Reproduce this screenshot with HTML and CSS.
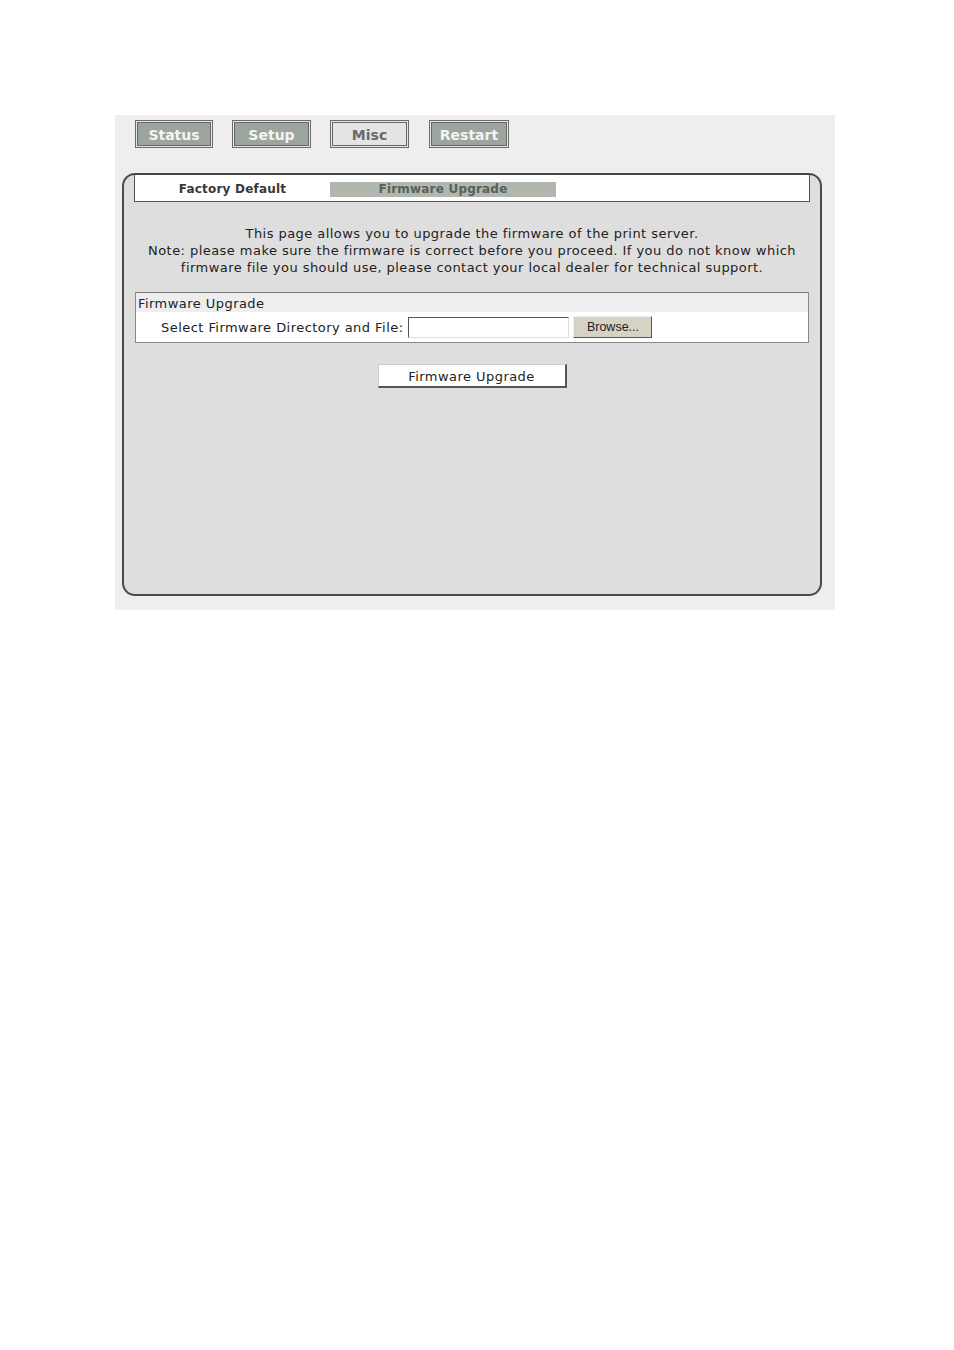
FILE: index.html
```html
<!DOCTYPE html>
<html>
<head>
<meta charset="utf-8">
<link rel="stylesheet" href="styles.css">
</head>
<body>
<div class="panel">
  <div class="topnav">
    <span class="tab tab-dark tab-status">Status</span>
    <span class="tab tab-dark tab-setup">Setup</span>
    <span class="tab tab-light tab-misc">Misc</span>
    <span class="tab tab-dark tab-restart">Restart</span>
  </div>
  <div class="box">
    <div class="subnav">
      <div class="subcell">Factory Default</div>
      <div class="subcell subcell-active"><span>Firmware Upgrade</span></div>
    </div>
    <div class="intro">
      This page allows you to upgrade the firmware of the print server.<br>
      Note: please make sure the firmware is correct before you proceed. If you do not know which<br>
      firmware file you should use, please contact your local dealer for technical support.
    </div>
    <div class="fwtable">
      <div class="fwhead">Firmware Upgrade</div>
      <div class="fwrow">
        <span class="fwlabel">Select Firmware Directory and File:</span>
        <span class="fwinput"></span>
        <span class="browse">Browse...</span>
      </div>
    </div>
    <div class="actions">
      <span class="upgrade">Firmware Upgrade</span>
    </div>
  </div>
</div>
</body>
</html>
```

FILE: styles.css
```css
html, body {
  margin: 0;
  padding: 0;
  background: #ffffff;
}
body {
  font-family: "DejaVu Sans", Verdana, sans-serif;
  color: #222;
}
.panel {
  margin: 115px 0 0 115px;
  width: 720px;
  height: 495px;
  background: #eeeeee;
  box-sizing: border-box;
  padding: 5px 0 0 7px;
}
.topnav {
  display: flex;
  padding-left: 13px;
  height: 28px;
}
.tab {
  box-sizing: border-box;
  height: 28px;
  padding-top: 1px;
  display: flex;
  align-items: center;
  justify-content: center;
  font-weight: bold;
  font-size: 14px;
  border: 1px solid #6b6b6b;
  box-shadow: inset 0 0 0 1px #e8e8e8, inset 0 0 0 2px #666;
}
.tab-status { width: 78px; }
.tab-setup { width: 79px; margin-left: 19px; }
.tab-misc { width: 79px; margin-left: 19px; }
.tab-restart { width: 80px; margin-left: 20px; }
.tab-dark {
  background: #9ca59d;
  color: #f4f4f4;
}
.tab-light {
  background: #e4e4e4;
  color: #6a6a6a;
}
.box {
  margin-top: 25px;
  width: 700px;
  height: 423px;
  box-sizing: border-box;
  border: 2px solid #4a4a4a;
  border-radius: 13px;
  background: #dedede;
  padding: 0 10px;
}
.subnav {
  margin-top: -1px;
  height: 28px;
  padding-top: 2px;
  box-sizing: border-box;
  background: #fff;
  border: 1px solid #555;
  border-top-color: #444;
  display: flex;
  align-items: center;
  font-size: 12px;
  letter-spacing: 0.2px;
  font-weight: bold;
  color: #383838;
}
.subcell {
  width: 195px;
  text-align: center;
}
.subcell-active {
  width: 226px;
  height: 15px;
  background: #b1b6af;
  color: #56615a;
  line-height: 15px;
}
.intro {
  margin-top: 23px;
  text-align: center;
  font-size: 13px;
  line-height: 17px;
  letter-spacing: 0.45px;
}
.fwtable {
  margin: 16px 0 0 1px;
  width: 674px;
  box-sizing: border-box;
  border: 1px solid #888;
  border-top-color: #777;
  font-size: 13px;
  letter-spacing: 0.45px;
}
.fwhead {
  background: #eeeeee;
  height: 19px;
  line-height: 21px;
  padding-left: 2px;
}
.fwrow {
  background: #fff;
  height: 30px;
  display: flex;
  align-items: center;
  padding-left: 25px;
}
.fwlabel {
  margin-right: 5px;
}
.fwinput {
  width: 161px;
  height: 21px;
  box-sizing: border-box;
  background: #fff;
  border: 1px solid #888;
  border-top-color: #555;
  border-left-color: #555;
  border-bottom-color: #ddd;
  border-right-color: #ddd;
}
.browse {
  margin-left: 4px;
  width: 79px;
  height: 22px;
  box-sizing: border-box;
  display: flex;
  align-items: center;
  justify-content: center;
  background: #d6d3c5;
  border: 1px solid #eee;
  border-right-color: #555;
  border-bottom-color: #555;
  font-family: "Liberation Sans", Arial, sans-serif;
  font-size: 12.5px;
  letter-spacing: 0;
  color: #222;
}
.actions {
  display: flex;
  justify-content: center;
  margin-top: 21px;
}
.upgrade {
  width: 189px;
  height: 24px;
  padding-top: 1px;
  box-sizing: border-box;
  display: flex;
  align-items: center;
  justify-content: center;
  background: #fff;
  border: 1px solid #ccc;
  border-right: 2px solid #555;
  border-bottom: 2px solid #555;
  font-size: 13px;
  letter-spacing: 0.45px;
  color: #222;
}
```
